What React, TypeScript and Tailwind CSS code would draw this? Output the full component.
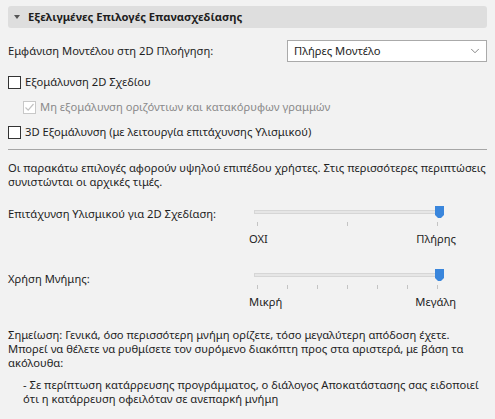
import { ChevronDown } from "lucide-react";

const font = { fontFamily: '"Noto Sans", "DejaVu Sans", sans-serif' };

function Checkbox({ checked, disabled }: { checked?: boolean; disabled?: boolean }) {
  return (
    <span
      className={`flex h-[13px] w-[13px] shrink-0 items-center justify-center border bg-white ${
        disabled ? "border-[#c8c8c8]" : "border-[#333]"
      }`}
    >
      {checked && (
        <svg width="11" height="11" viewBox="0 0 11 11">
          <path d="M1.5 5.5 L4.2 8.2 L9.5 2" fill="none" stroke={disabled ? "#c2c2c2" : "#333"} strokeWidth="1.2" />
        </svg>
      )}
    </span>
  );
}

function Slider({ ticks, left, right }: { ticks: number; left: string; right: string }) {
  const positions = Array.from({ length: ticks }, (_, i) => i / (ticks - 1));
  return (
    <div className="w-[186px]">
      <div className="relative h-[12px]">
        <div className="absolute left-0 right-0 top-[4px] h-[4px] border border-[#d6d6d6] bg-[#e6e6e6]" />
        <svg className="absolute right-[-4px] top-0" width="9" height="13" viewBox="0 0 9 13">
          <path d="M0 0 H9 V9 L6 12 H3 L0 9 Z" fill="#3a86dc" />
        </svg>
      </div>
      <div className="relative mx-[3px] mt-[4px] h-[4px]">
        {positions.map((p) => (
          <span
            key={p}
            className="absolute top-0 h-[4px] w-px bg-[#c4c4c4]"
            style={{ left: `${p * 100}%` }}
          />
        ))}
      </div>
      <div className="mt-[5px] flex justify-between leading-[16px]">
        <span className="-ml-[5px]">{left}</span>
        <span className="-mr-[16px]">{right}</span>
      </div>
    </div>
  );
}

export default function App() {
  return (
    <div
      className="h-[419px] w-[495px] overflow-hidden bg-[#f2f2f2] px-[8px] pt-[6px] text-[11.2px] leading-[16px] text-[#1e1e1e]"
      style={font}
    >
      <div className="flex h-[22px] items-center gap-[8px] rounded-[3px] bg-[#dedede] px-[6px] font-bold">
        <svg width="6" height="4" viewBox="0 0 6 4">
          <path d="M0 0 H6 L3 4 Z" fill="#555" />
        </svg>
        <span>Εξελιγμένες Επιλογές Επανασχεδίασης</span>
      </div>

      <div className="mt-[12px] flex items-center justify-between">
        <span>Εμφάνιση Μοντέλου στη 2D Πλοήγηση:</span>
        <div className="flex h-[22px] w-[200px] items-center justify-between border border-[#aaa] bg-white pl-[6px] pr-[4px]">
          <span>Πλήρες Μοντέλο</span>
          <ChevronDown size={14} strokeWidth={1.2} className="text-[#555]" />
        </div>
      </div>

      <label className="mt-[12px] flex items-center gap-[4px]">
        <Checkbox />
        <span>Εξομάλυνση 2D Σχεδίου</span>
      </label>
      <label className="ml-[15px] mt-[9px] flex items-center gap-[4px] text-[#8a8a8a]">
        <Checkbox checked disabled />
        <span>Μη εξομάλυνση οριζόντιων και κατακόρυφων γραμμών</span>
      </label>
      <label className="mt-[9px] flex items-center gap-[4px]">
        <Checkbox />
        <span>3D Εξομάλυνση (με λειτουργία επιτάχυνσης Υλισμικού)</span>
      </label>

      <div className="mt-[9px] h-px bg-[#a6a6a6]" />

      <p className="mt-[11px] leading-[14px]">
        Οι παρακάτω επιλογές αφορούν υψηλού επιπέδου χρήστες. Στις περισσότερες περιπτώσεις
        συνιστώνται οι αρχικές τιμές.
      </p>

      <div className="mt-[17px] flex items-start justify-between pr-[47px]">
        <span>Επιτάχυνση Υλισμικού για 2D Σχεδίαση:</span>
        <Slider ticks={3} left="ΟΧΙ" right="Πλήρης" />
      </div>

      <div className="mt-[22px] flex items-start justify-between pr-[47px]">
        <span className="mt-[2px]">Χρήση Μνήμης:</span>
        <Slider ticks={7} left="Μικρή" right="Μεγάλη" />
      </div>

      <p className="mt-[18px] leading-[14px]">
        Σημείωση: Γενικά, όσο περισσότερη μνήμη ορίζετε, τόσο μεγαλύτερη απόδοση έχετε.
        Μπορεί να θέλετε να ρυθμίσετε τον συρόμενο διακόπτη προς στα αριστερά, με βάση τα
        ακόλουθα:
      </p>
      <p className="mt-[8px] pl-[15px] leading-[14px]">
        - Σε περίπτωση κατάρρευσης προγράμματος, ο διάλογος Αποκατάστασης σας ειδοποιεί ότι η
        κατάρρευση οφειλόταν σε ανεπαρκή μνήμη
      </p>
    </div>
  );
}
